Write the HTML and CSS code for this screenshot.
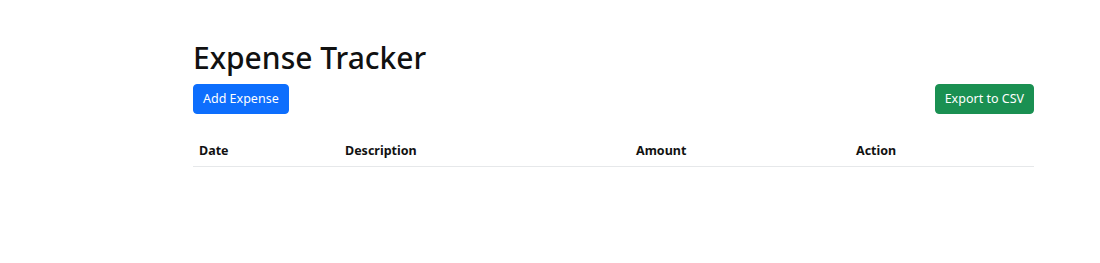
FILE: index.html
```html
<!DOCTYPE html>
<html lang="en">
<head>
  <meta charset="UTF-8">
  <meta name="viewport" content="width=device-width, initial-scale=1.0">
  <title>Expense Tracker</title>
  <link rel="stylesheet" href="styles.css">
</head>
<body>

  <div class="container">
    <h1>Expense Tracker</h1>

    <div class="toolbar">
      <button class="btn btn-primary" onclick="addExpense()">Add Expense</button>
      <button class="btn btn-success" onclick="exportCSV()">Export to CSV</button>
    </div>

    <table class="table">
      <thead>
        <tr>
          <th class="col-date">Date</th>
          <th class="col-desc">Description</th>
          <th class="col-amount">Amount</th>
          <th>Action</th>
        </tr>
      </thead>
      <tbody id="expenseList"></tbody>
    </table>
  </div>

  <script>
    // Expenses kept in memory for this page
    const expenses = [];

    function addExpense() {
      // Placeholder for opening the add form
    }

    function exportCSV() {
      // Build a CSV string from the current list
      const rows = expenses.map(e => [e.date, e.description, e.amount].join(","));
      return ["Date,Description,Amount"].concat(rows).join("\n");
    }
  </script>

</body>
</html>
```

FILE: styles.css
```css
body {
  font-family: 'Noto Sans', 'Open Sans', sans-serif;
  background-color: #fff;
  color: #212529;
  margin: 0;
}
.container {
  width: 841px;
  margin-left: 193px;
  padding-top: 40px;
}
h1 {
  font-size: 30px;
  font-weight: 500;
  line-height: 1.2;
  margin: 0 0 8px 0;
  color: #111;
}
.toolbar {
  display: flex;
  justify-content: space-between;
  margin-bottom: 21px;
}
.btn {
  font-family: inherit;
  font-size: 12.5px;
  line-height: 20px;
  padding: 4px 9px;
  border: 1px solid transparent;
  border-radius: 4px;
  color: #fff;
  cursor: pointer;
}
.btn-primary {
  background-color: #0d6efd;
  border-color: #0d6efd;
}
.btn-success {
  background-color: #1a9052;
  border-color: #1a9052;
}
.table {
  width: 100%;
  border-collapse: collapse;
}
.table th {
  text-align: left;
  font-size: 12.5px;
  font-weight: 700;
  color: #111;
  padding: 7px 6px;
  border-bottom: 1px solid #e6e8ea;
}
.col-date {
  width: 134px;
}
.col-desc {
  width: 279px;
}
.col-amount {
  width: 208px;
}
```
